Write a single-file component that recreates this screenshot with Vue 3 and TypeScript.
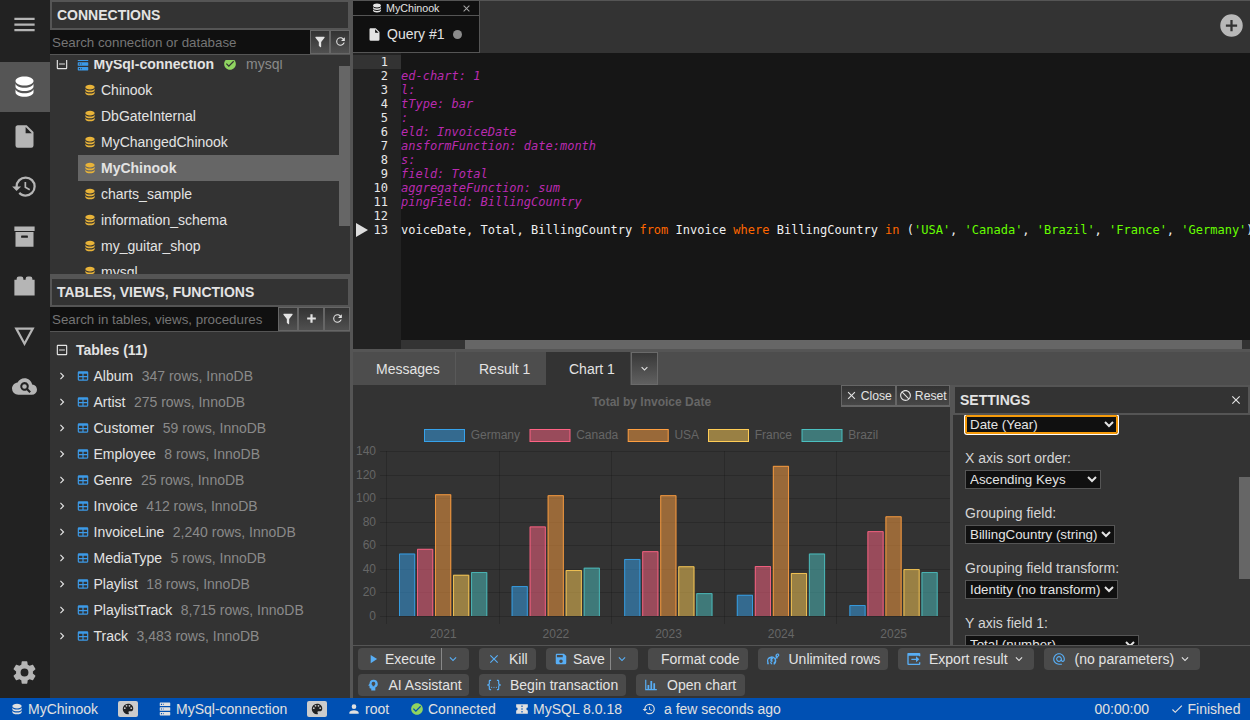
<script setup lang="ts">
import { h } from 'vue'

const paths: Record<string, string> = {
  menu: 'M3,6H21V8H3V6M3,11H21V13H3V11M3,16H21V18H3V16Z',
  database: 'M12,3C7.58,3 4,4.79 4,7C4,9.21 7.58,11 12,11C16.42,11 20,9.21 20,7C20,4.79 16.42,3 12,3M4,9V12C4,14.21 7.58,16 12,16C16.42,16 20,14.21 20,12V9C20,11.21 16.42,13 12,13C7.58,13 4,11.21 4,9M4,14V17C4,19.21 7.58,21 12,21C16.42,21 20,19.21 20,17V14C20,16.21 16.42,18 12,18C7.58,18 4,16.21 4,14Z',
  file: 'M13,9V3.5L18.5,9M6,2C4.89,2 4,2.89 4,4V20A2,2 0 0,0 6,22H18A2,2 0 0,0 20,20V8L14,2H6Z',
  history: 'M13.5,8H12V13L16.28,15.54L17,14.33L13.5,12.25V8M13,3A9,9 0 0,0 4,12H1L4.96,16.03L9,12H6A7,7 0 0,1 13,5A7,7 0 0,1 20,12A7,7 0 0,1 13,19C11.07,19 9.32,18.21 8.06,16.94L6.64,18.36C8.27,20 10.5,21 13,21A9,9 0 0,0 22,12A9,9 0 0,0 13,3',
  archive: 'M3,3H21V7H3V3M4,8H20V21H4V8M9.5,11A0.5,0.5 0 0,0 9,11.5V13H15V11.5A0.5,0.5 0 0,0 14.5,11H9.5Z',
  brick: 'M19,6V5A2,2 0 0,0 17,3H15A2,2 0 0,0 13,5V6H11V5A2,2 0 0,0 9,3H7A2,2 0 0,0 5,5V6H3V20H21V6H19Z',
  triangle: 'M3,4H21L12,20.5ZM6.4,6L12,16.4L17.6,6Z',
  cloudSearch: 'M19.35,10.04C18.67,6.59 15.64,4 12,4C9.11,4 6.6,5.64 5.35,8.04C2.34,8.36 0,10.91 0,14A6,6 0 0,0 6,20H19A5,5 0 0,0 24,15C24,12.36 21.95,10.22 19.35,10.04ZM12,7.7A4.2,4.2 0 0,1 15.6,14.1L18.2,16.7L16.7,18.2L14.1,15.6A4.2,4.2 0 1,1 12,7.7ZM12,9.8A2.2,2.2 0 0,0 12,14.2A2.2,2.2 0 0,0 12,9.8Z',
  cog: 'M12,15.5A3.5,3.5 0 0,1 8.5,12A3.5,3.5 0 0,1 12,8.5A3.5,3.5 0 0,1 15.5,12A3.5,3.5 0 0,1 12,15.5M19.43,12.97C19.47,12.65 19.5,12.33 19.5,12C19.5,11.67 19.47,11.34 19.43,11L21.54,9.37C21.73,9.22 21.78,8.95 21.66,8.73L19.66,5.27C19.54,5.05 19.27,4.96 19.05,5.05L16.56,6.05C16.04,5.66 15.5,5.32 14.87,5.07L14.5,2.42C14.46,2.18 14.25,2 14,2H10C9.75,2 9.54,2.18 9.5,2.42L9.13,5.07C8.5,5.32 7.96,5.66 7.44,6.05L4.95,5.05C4.73,4.96 4.46,5.05 4.34,5.27L2.34,8.73C2.21,8.95 2.27,9.22 2.46,9.37L4.57,11C4.53,11.34 4.5,11.67 4.5,12C4.5,12.33 4.53,12.65 4.57,12.97L2.46,14.63C2.27,14.78 2.21,15.05 2.34,15.27L4.34,18.73C4.46,18.95 4.73,19.03 4.95,18.95L7.44,17.94C7.96,18.34 8.5,18.68 9.13,18.93L9.5,21.58C9.54,21.82 9.75,22 10,22H14C14.25,22 14.46,21.82 14.5,21.58L14.87,18.93C15.5,18.67 16.04,18.34 16.56,17.94L19.05,18.95C19.27,19.03 19.54,18.95 19.66,18.73L21.66,15.27C21.78,15.05 21.73,14.78 21.54,14.63L19.43,12.97Z',
  server: 'M4,1H20A1,1 0 0,1 21,2V6A1,1 0 0,1 20,7H4A1,1 0 0,1 3,6V2A1,1 0 0,1 4,1M4,9H20A1,1 0 0,1 21,10V14A1,1 0 0,1 20,15H4A1,1 0 0,1 3,14V10A1,1 0 0,1 4,9M4,17H20A1,1 0 0,1 21,18V22A1,1 0 0,1 20,23H4A1,1 0 0,1 3,22V18A1,1 0 0,1 4,17M9,5H10V3H9V5M9,13H10V11H9V13M9,21H10V19H9V21M5,3V5H7V3H5M5,11V13H7V11H5M5,19V21H7V19H5Z',
  minusBox: 'M19,19V5H5V19H19M19,3A2,2 0 0,1 21,5V19A2,2 0 0,1 19,21H5A2,2 0 0,1 3,19V5C3,3.89 3.9,3 5,3H19M17,11V13H7V11H17Z',
  checkCircle: 'M12 2C6.5 2 2 6.5 2 12S6.5 22 12 22 22 17.5 22 12 17.5 2 12 2M10 17L5 12L6.41 10.59L10 14.17L17.59 6.58L19 8L10 17Z',
  filter: 'M14,12V19.88C14.04,20.18 13.94,20.5 13.71,20.71C13.32,21.1 12.69,21.1 12.3,20.71L10.29,18.7C10.06,18.47 9.96,18.16 10,17.87V12H9.97L4.21,4.62C3.87,4.19 3.95,3.56 4.38,3.22C4.57,3.08 4.78,3 5,3H19C19.22,3 19.43,3.08 19.62,3.22C20.05,3.56 20.13,4.19 19.79,4.62L14.03,12H14Z',
  refresh: 'M17.65,6.35C16.2,4.9 14.21,4 12,4A8,8 0 0,0 4,12A8,8 0 0,0 12,20C15.73,20 18.84,17.45 19.73,14H17.65C16.83,16.33 14.61,18 12,18A6,6 0 0,1 6,12A6,6 0 0,1 12,6C13.66,6 15.14,6.69 16.22,7.78L13,11H20V4L17.65,6.35Z',
  plusThick: 'M20 14H14V20H10V14H4V10H10V4H14V10H20V14Z',
  chevronRight: 'M8.59,16.58L13.17,12L8.59,7.41L10,6L16,12L10,18L8.59,16.58Z',
  chevronDown: 'M7.41,8.58L12,13.17L16.59,8.58L18,10L12,16L6,10L7.41,8.58Z',
  table: 'M5,4H19A2,2 0 0,1 21,6V18A2,2 0 0,1 19,20H5A2,2 0 0,1 3,18V6A2,2 0 0,1 5,4M5,8V12H11V8H5M13,8V12H19V8H13M5,14V18H11V14H5M13,14V18H19V14H13Z',
  close: 'M19,6.41L17.59,5L12,10.59L6.41,5L5,6.41L10.59,12L5,17.59L6.41,19L12,13.41L17.59,19L19,17.59L13.41,12L19,6.41Z',
  plusCircle: 'M17,13H13V17H11V13H7V11H11V7H13V11H17M12,2A10,10 0 0,0 2,12A10,10 0 0,0 12,22A10,10 0 0,0 22,12A10,10 0 0,0 12,2Z',
  cancel: 'M12 2C17.5 2 22 6.5 22 12S17.5 22 12 22 2 17.5 2 12 6.5 2 12 2M12 4C10.1 4 8.4 4.6 7.1 5.7L18.3 16.9C19.3 15.5 20 13.8 20 12C20 7.6 16.4 4 12 4M16.9 18.3L5.7 7.1C4.6 8.4 4 10.1 4 12C4 16.4 7.6 20 12 20C13.9 20 15.6 19.4 16.9 18.3Z',
  play: 'M8,5.14V19.14L19,12.14L8,5.14Z',
  save: 'M15,9H5V5H15M12,19A3,3 0 0,1 9,16A3,3 0 0,1 12,13A3,3 0 0,1 15,16A3,3 0 0,1 12,19M17,3H5C3.89,3 3,3.9 3,5V19A2,2 0 0,0 5,21H19A2,2 0 0,0 21,19V7L17,3Z',
  palette: 'M17.5,12A1.5,1.5 0 0,1 16,10.5A1.5,1.5 0 0,1 17.5,9A1.5,1.5 0 0,1 19,10.5A1.5,1.5 0 0,1 17.5,12M14.5,8A1.5,1.5 0 0,1 13,6.5A1.5,1.5 0 0,1 14.5,5A1.5,1.5 0 0,1 16,6.5A1.5,1.5 0 0,1 14.5,8M9.5,8A1.5,1.5 0 0,1 8,6.5A1.5,1.5 0 0,1 9.5,5A1.5,1.5 0 0,1 11,6.5A1.5,1.5 0 0,1 9.5,8M6.5,12A1.5,1.5 0 0,1 5,10.5A1.5,1.5 0 0,1 6.5,9A1.5,1.5 0 0,1 8,10.5A1.5,1.5 0 0,1 6.5,12M12,3A9,9 0 0,0 3,12A9,9 0 0,0 12,21A1.5,1.5 0 0,0 13.5,19.5C13.5,19.11 13.35,18.76 13.11,18.5C12.88,18.23 12.73,17.88 12.73,17.5A1.5,1.5 0 0,1 14.23,16H16A5,5 0 0,0 21,11C21,6.58 16.97,3 12,3Z',
  account: 'M12,4A4,4 0 0,1 16,8A4,4 0 0,1 12,12A4,4 0 0,1 8,8A4,4 0 0,1 12,4M12,14C16.42,14 20,15.79 20,18V20H4V18C4,15.79 7.58,14 12,14Z',
  ticket: 'M2,4H22V9.5A2.5,2.5 0 0,0 22,14.5V20H2V14.5A2.5,2.5 0 0,0 2,9.5ZM11,6V8.5H13V6ZM11,10.7V13.3H13V10.7ZM11,15.5V18H13V15.5Z',
  check: 'M21,7L9,19L3.5,13.5L4.91,12.09L9,16.17L19.59,5.59L21,7Z',
  json: 'M5,3H7V5H5V10A2,2 0 0,1 3,12A2,2 0 0,1 5,14V19H7V21H5C3.93,20.73 3,20.1 3,19V15A2,2 0 0,0 1,13H0V11H1A2,2 0 0,0 3,9V5A2,2 0 0,1 5,3M19,3A2,2 0 0,1 21,5V9A2,2 0 0,0 23,11H24V13H23A2,2 0 0,0 21,15V19A2,2 0 0,1 19,21H17V19H19V14A2,2 0 0,1 21,12A2,2 0 0,1 19,10V5H17V3H19M12,15A1,1 0 0,1 13,16A1,1 0 0,1 12,17A1,1 0 0,1 11,16A1,1 0 0,1 12,15M8,15A1,1 0 0,1 9,16A1,1 0 0,1 8,17A1,1 0 0,1 7,16A1,1 0 0,1 8,15M16,15A1,1 0 0,1 17,16A1,1 0 0,1 16,17A1,1 0 0,1 15,16A1,1 0 0,1 16,15Z',
  chart: 'M2,3H4V19H6V12H9V19H11V5H14V19H16V9H19V19H22V21H2Z',
  at: 'M12,15C12.81,15 13.5,14.7 14.11,14.11C14.7,13.5 15,12.81 15,12C15,11.19 14.7,10.5 14.11,9.89C13.5,9.3 12.81,9 12,9C11.19,9 10.5,9.3 9.89,9.89C9.3,10.5 9,11.19 9,12C9,12.81 9.3,13.5 9.89,14.11C10.5,14.7 11.19,15 12,15M12,2C14.75,2 17.1,3 19.05,4.95C21,6.9 22,9.25 22,12V13.45C22,14.45 21.65,15.3 21,16C20.3,16.67 19.5,17 18.5,17C17.3,17 16.31,16.5 15.56,15.5C14.56,16.5 13.38,17 12,17C10.63,17 9.45,16.5 8.46,15.54C7.5,14.55 7,13.38 7,12C7,10.63 7.5,9.45 8.46,8.46C9.45,7.5 10.63,7 12,7C13.38,7 14.55,7.5 15.54,8.46C16.5,9.45 17,10.63 17,12V13.45C17,13.86 17.16,14.22 17.46,14.53C17.76,14.84 18.11,15 18.5,15C18.92,15 19.27,14.84 19.57,14.53C19.87,14.22 20,13.86 20,13.45V12C20,9.81 19.23,7.93 17.65,6.35C16.07,4.77 14.19,4 12,4C9.81,4 7.93,4.77 6.35,6.35C4.77,7.93 4,9.81 4,12C4,14.19 4.77,16.07 6.35,17.65C7.93,19.23 9.81,20 12,20H17V22H12C9.25,22 6.9,21 4.95,19.05C3,17.1 2,14.75 2,12C2,9.25 3,6.9 4.95,4.95C6.9,3 9.25,2 12,2Z',
  head: 'M13,3A7,7 0 0,0 6,9.8L4.1,12.4C3.8,12.8 4.1,13.3 4.6,13.3H6V16A2,2 0 0,0 8,18H9V21.5H16V16.4A7,7 0 0,0 13,3ZM12.8,6.5A3.2,3.2 0 0,1 14.4,12.5V14H11.2V12.5A3.2,3.2 0 0,1 12.8,6.5Z',
  exportBox: 'M3,3H20A1.5,1.5 0 0,1 21.5,4.5V8H19.5V7H4V19H19.5V17H21.5V19.5A1.5,1.5 0 0,1 20,21H3.5A1.5,1.5 0 0,1 2,19.5V4.5A1.5,1.5 0 0,1 3,3ZM15,8L20,12.5L15,17V13.5H8V11.5H15Z',
  speed: 'M2,17C1,12 4,8 9,7.5C12,7.2 14.5,8.5 15.5,10.5L17,9C15,6.5 17,2.5 20,2.5C23.2,2.5 23.8,6.3 21.5,7.5L20,8.5V11H18V7.5L20.5,6C21.3,5.2 20.7,4.3 19.8,4.5C18.3,4.8 18.4,7.4 19,9L17,12C18.5,15 17.5,19 15,21.5H13V18L15,16C15.5,13 13.8,10 11,9.8L13,12L10,13L12,16L9,17L11,21H8.5L7,17.5L9,15L6.5,14.5L8.5,11L5.5,11.5C3.8,12.8 3.6,14.5 4,16L5,21H2Z',
}

const Icon = (p: { n: string; s?: number }) =>
  h('svg', { viewBox: '0 0 24 24', width: p.s ?? 14, height: p.s ?? 14, fill: 'currentColor', 'fill-rule': p.n === 'triangle' || p.n === 'cloudSearch' || p.n === 'ticket' || p.n === 'head' ? 'evenodd' : 'nonzero' }, [
    h('path', { d: paths[p.n] }),
  ])
Icon.props = ['n', 's']

const rail = ['file', 'history', 'archive', 'brick', 'triangle', 'cloudSearch']
const databases = ['Chinook', 'DbGateInternal', 'MyChangedChinook', 'MyChinook', 'charts_sample', 'information_schema', 'my_guitar_shop', 'mysql']
const tables: [string, string][] = [
  ['Album', '347'], ['Artist', '275'], ['Customer', '59'], ['Employee', '8'], ['Genre', '25'], ['Invoice', '412'],
  ['InvoiceLine', '2,240'], ['MediaType', '5'], ['Playlist', '18'], ['PlaylistTrack', '8,715'], ['Track', '3,483'],
]
const comments = ['', 'ed-chart: 1', 'l:', 'tType: bar', ':', 'eld: InvoiceDate', 'ansformFunction: date:month', 's:', 'field: Total', 'aggregateFunction: sum', 'pingField: BillingCountry', '']
const countries = ['USA', 'Canada', 'Brazil', 'France', 'Germany']

const series = [
  { name: 'Germany', x: 71, rgb: '54,162,235', data: [53, 25.4, 48.4, 18, 9.3] },
  { name: 'Canada', x: 176.5, rgb: '255,99,132', data: [57, 76, 55, 42.4, 72] },
  { name: 'USA', x: 274.7, rgb: '255,159,64', data: [103.3, 102.5, 102.5, 127.4, 84.6] },
  { name: 'France', x: 355, rgb: '255,205,86', data: [35, 39, 42.2, 36.5, 39.8] },
  { name: 'Brazil', x: 448.5, rgb: '75,192,192', data: [37.3, 41, 19.4, 53, 37.3] },
]
const years = [2021, 2022, 2023, 2024, 2025]
const ticks = [0, 20, 40, 60, 80, 100, 120, 140]
const X0 = 34
const CW = 112.6
const yOf = (v: number) => 231 - (v * 165) / 140
const barX = (s: number, k: number) => X0 + k * CW + 12 + s * 18.02
function barEdge(s: number, k: number, v: number) {
  const x = barX(s, k) + 0.5
  return `M${x},231V${yOf(v) + 0.5}H${x + 15.2}V231`
}

const settings = [
  { label: 'X axis sort order:', value: 'Ascending Keys', cls: 'w1' },
  { label: 'Grouping field:', value: 'BillingCountry (string)', cls: 'w2' },
  { label: 'Grouping field transform:', value: 'Identity (no transform)', cls: 'w3' },
  { label: 'Y axis field 1:', value: 'Total (number)', cls: 'w4' },
]
</script>

<template>
  <div class="app">
    <div class="main">
      <nav class="rail">
        <div class="rail-item menu"><Icon n="menu" :s="27" /></div>
        <div class="rail-item active"><Icon n="database" :s="27" /></div>
        <div v-for="r in rail" :key="r" class="rail-item"><Icon :n="r" :s="r === 'cloudSearch' ? 25 : 27" /></div>
        <div class="rail-item bottom"><Icon n="cog" :s="27" /></div>
      </nav>

      <aside class="side">
        <h2 class="title">CONNECTIONS</h2>
        <div class="search">
          <input placeholder="Search connection or database" />
          <button class="sb b20"><Icon n="filter" /></button>
          <button class="sb b20"><Icon n="refresh" :s="13" /></button>
        </div>
        <div class="conn">
          <div class="tree">
            <div class="row">
              <Icon n="minusBox" /><Icon class="blue gap" n="server" /><b>MySql-connection</b>
              <Icon class="green ok" n="checkCircle" /><span class="dim">mysql</span>
            </div>
            <div v-for="d in databases" :key="d" class="row db" :class="{ sel: d === 'MyChinook' }">
              <Icon class="gold" n="database" /><span>{{ d }}</span>
            </div>
          </div>
          <div class="thumb"></div>
        </div>
        <div class="hsplit"></div>
        <h2 class="title">TABLES, VIEWS, FUNCTIONS</h2>
        <div class="search">
          <input placeholder="Search in tables, views, procedures" />
          <button class="sb b20"><Icon n="filter" /></button>
          <button class="sb b26"><Icon n="plusThick" :s="13" /></button>
          <button class="sb b26"><Icon n="refresh" :s="13" /></button>
        </div>
        <div class="tables">
          <div class="row"><Icon n="minusBox" /><b class="group">Tables (11)</b></div>
          <div v-for="t in tables" :key="t[0]" class="row">
            <Icon n="chevronRight" /><Icon class="blue gap" n="table" /><span>{{ t[0] }}</span>
            <span class="dim meta">{{ t[1] }} rows, InnoDB</span>
          </div>
        </div>
      </aside>
      <div class="vsplit"></div>

      <section class="work">
        <header class="tabs">
          <div class="tabgroup">
            <div class="tg-name"><Icon n="database" :s="12" /><span>MyChinook</span><Icon class="x" n="close" :s="11" /></div>
            <div class="tab"><Icon n="file" :s="15" /><span>Query #1</span><i class="dot"></i></div>
          </div>
          <Icon class="add" n="plusCircle" :s="27" />
        </header>

        <div class="editor">
          <div class="gutter">
            <div v-for="n in 13" :key="n" class="ln" :class="{ cur: n === 1 }">
              <svg v-if="n === 13" class="marker" width="12" height="14"><path d="M0,0L12,7L0,14Z" fill="#ddd" /></svg>{{ n }}
            </div>
          </div>
          <div class="code">
            <div class="lines">
              <div v-for="(c, i) in comments" :key="i" class="cl cm">{{ c }}</div>
              <div class="cl">voiceDate, Total, BillingCountry <span class="kw">from</span> Invoice <span class="kw">where</span> BillingCountry <span class="kw">in</span> (<template v-for="(c, i) in countries" :key="c"><span class="str">'{{ c }}'</span>{{ i < 4 ? ', ' : ')' }}</template></div>
            </div>
            <div class="hscroll"><div class="hthumb"></div></div>
          </div>
        </div>

        <div class="rtabs">
          <div class="rt t1">Messages</div>
          <div class="rt t2">Result 1</div>
          <div class="rt t3">Chart 1</div>
          <button class="rbtn"><Icon n="chevronDown" :s="13" /></button>
        </div>

        <div class="result">
          <div class="chart">
            <svg width="597" height="260">
              <text x="298.5" y="21" class="ct" text-anchor="middle">Total by Invoice Date</text>
              <g v-for="s in series" :key="s.name">
                <rect :x="s.x + 0.5" y="44.5" width="40" height="12" :fill="`rgba(${s.rgb},.5)`" :stroke="`rgb(${s.rgb})`" />
                <text :x="s.x + 46.7" y="54">{{ s.name }}</text>
              </g>
              <g v-for="t in ticks" :key="t">
                <line x1="27" x2="597" :y1="Math.round(yOf(t)) + 0.5" :y2="Math.round(yOf(t)) + 0.5" class="grid" />
                <text x="23" :y="yOf(t) + 4" text-anchor="end">{{ t }}</text>
              </g>
              <g v-for="(y, k) in years" :key="y">
                <line :x1="Math.round(X0 + k * CW) - 0.5" :x2="Math.round(X0 + k * CW) - 0.5" y1="66" y2="239" class="grid" />
                <text :x="X0 + (k + 0.5) * CW" y="253" text-anchor="middle">{{ y }}</text>
              </g>
              <g v-for="(s, si) in series" :key="s.name + 'b'">
                <template v-for="(v, k) in s.data" :key="k">
                  <rect :x="barX(si, k)" :y="yOf(v)" width="16.2" :height="231 - yOf(v)" :fill="`rgba(${s.rgb},.5)`" />
                  <path :d="barEdge(si, k, v)" fill="none" :stroke="`rgb(${s.rgb})`" stroke-opacity=".85" />
                </template>
              </g>
            </svg>
            <div class="chart-btns">
              <button><Icon n="close" :s="13" />Close</button><button><Icon n="cancel" :s="13" />Reset</button>
            </div>
          </div>
          <div class="vsplit2"></div>
          <div class="settings">
            <h2 class="title">SETTINGS<Icon n="close" :s="14" /></h2>
            <div class="form">
              <div class="focused"><select><option>Date (Year)</option></select></div>
              <div v-for="f in settings" :key="f.label" class="field">
                <label>{{ f.label }}</label>
                <select :class="f.cls"><option>{{ f.value }}</option></select>
              </div>
              <div class="sthumb"></div>
            </div>
          </div>
        </div>

        <footer class="toolbar">
          <div class="line">
            <div class="btn e"><Icon n="play" /><span>Execute</span><i class="drop"><Icon n="chevronDown" /></i></div>
            <div class="btn k"><Icon n="close" /><span>Kill</span></div>
            <div class="btn s"><Icon n="save" /><span>Save</span><i class="drop"><Icon n="chevronDown" /></i></div>
            <div class="btn f"><span>Format code</span></div>
            <div class="btn u"><Icon n="speed" /><span>Unlimited rows</span></div>
            <div class="btn x"><Icon n="exportBox" :s="16" /><span>Export result</span><Icon class="white" n="chevronDown" /></div>
            <div class="btn p"><Icon n="at" /><span>(no parameters)</span><Icon class="white" n="chevronDown" /></div>
          </div>
          <div class="line">
            <div class="btn a"><Icon n="head" /><span>AI Assistant</span></div>
            <div class="btn b"><Icon n="json" /><span>Begin transaction</span></div>
            <div class="btn o"><Icon n="chart" /><span>Open chart</span></div>
          </div>
        </footer>
      </section>
    </div>

    <div class="status">
      <div><Icon n="database" /><span>MyChinook</span></div>
      <div><i class="badge"><Icon n="palette" /></i></div>
      <div><Icon n="server" /><span>MySql-connection</span></div>
      <div><i class="badge"><Icon n="palette" /></i></div>
      <div><Icon n="account" /><span>root</span></div>
      <div><Icon class="green" n="checkCircle" /><span>Connected</span></div>
      <div><Icon n="ticket" /><span>MySQL 8.0.18</span></div>
      <div class="time"><Icon n="history" /><span>a few seconds ago</span></div>
      <div>00:00:00</div>
      <div><Icon n="check" /><span>Finished</span></div>
    </div>
  </div>
</template>

<style>
body { background: #333; overflow: hidden; }
</style>

<style scoped>
* { box-sizing: border-box; }
.app { width: 1250px; height: 720px; display: flex; flex-direction: column; overflow: hidden; background: #333; color: #e3e3e3; font: 14px/16px "Liberation Sans", Arial, sans-serif; }
svg { display: block; flex: none; }
button { font: inherit; color: inherit; padding: 0; display: flex; align-items: center; justify-content: center; }
.main { display: flex; height: 698px; }
.rail { width: 50px; background: #222; display: flex; flex-direction: column; }
.rail-item { height: 50px; display: flex; align-items: center; justify-content: center; color: #b5b5b5; flex: none; padding: 0 1px 2px 0; }
.rail-item.menu { height: 48px; margin-bottom: 14px; padding-bottom: 0; }
.rail-item.active { background: #555; color: #fff; height: 50px; }
.rail-item.bottom { margin-top: auto; height: 52px; padding-bottom: 0; }
.side { width: 300px; display: flex; flex-direction: column; }
.title { margin: 0; height: 30px; border: 2px solid #555; padding: 0 5px; font-size: 14px; display: flex; align-items: center; flex: none; }
.search { display: flex; height: 25px; border-bottom: 1px solid #555; background: #101010; flex: none; }
.search input { flex: 1; min-width: 0; border: 0; outline: 0; background: #101010; padding: 0 2px; font: 13.333px "Liberation Sans", Arial, sans-serif; color: #e3e3e3; }
.search input::placeholder { color: #757575; }
.sb { border: 1px solid #666; background: linear-gradient(#333, #505050); height: 24px; padding-bottom: 1px; }
.b20 { width: 20px; }
.b26 { width: 26px; }
.conn { height: 214px; margin-top: 5px; overflow: hidden; display: flex; flex: none; }
.tree { width: 289px; margin-top: -9px; }
.thumb { width: 11px; height: 160px; margin-top: 6px; background: #666; }
.row { height: 26px; display: flex; align-items: center; padding-left: 5px; white-space: nowrap; }
.row .gap { margin: 0 4px 0 6.5px; }
.row .ok { margin: 0 9px; }
.row.db { margin-left: 28px; }
.row.db svg { margin-right: 4px; }
.row.sel { background: #666; font-weight: bold; }
.group { margin-left: 7px; }
.dim { color: #8a8a8a; }
.meta { margin-left: 8.5px; }
.blue { color: #3c9ae8; }
.green { color: #8fd460; }
.gold { color: #e8b339; }
.hsplit { height: 3px; background: #555; flex: none; }
.tables { padding-top: 5px; }
.vsplit { width: 3px; background: #555; }
.work { width: 897px; display: flex; flex-direction: column; }
.tabs { height: 53px; border-top: 1px solid #555; display: flex; justify-content: space-between; }
.tabgroup { width: 127px; border-right: 1px solid #555; background: #101010; }
.tg-name { height: 15px; border-bottom: 1px solid #555; display: flex; align-items: center; font-size: 10.7px; padding-left: 18px; }
.tg-name span { margin-left: 3px; }
.tg-name .x { margin-left: 22px; color: #aaa; }
.tab { height: 37px; border-bottom: 1px solid #555; display: flex; align-items: center; padding-left: 14px; }
.tab span { margin: 0 8px 0 5px; }
.dot { width: 9px; height: 9px; border-radius: 50%; background: #8c8c8c; }
.add { color: #b8b8b8; margin: 11px 5px 0 0; }
.editor { height: 296px; display: flex; background: #161616; font: 12px/14px "DejaVu Sans Mono", monospace; }
.gutter { width: 48px; background: #222; padding-top: 2px; }
.ln { height: 14px; text-align: right; padding-right: 13px; position: relative; color: #e8e8e8; }
.ln.cur { background: #333; }
.marker { position: absolute; left: 3px; top: 0; }
.code { width: 849px; overflow: hidden; display: flex; flex-direction: column; }
.lines { padding-top: 2px; flex: 1; }
.cl { height: 14px; white-space: pre; color: #f0f0f0; }
.cm { color: #b92bb0; font-style: italic; }
.kw { color: #ff6600; }
.str { color: #66ff00; }
.hscroll { height: 9px; background: #333; padding: 0 8px 0 64px; }
.hthumb { height: 9px; background: #666; }
.rtabs { height: 36px; border-top: 3px solid #555; background: #4d4d4d; display: flex; }
.rt { padding-left: 23px; display: flex; align-items: center; padding-top: 1px; }
.t1 { width: 103px; border-right: 1px solid #595959; }
.t2 { width: 90px; }
.t3 { width: 84px; background: #333; }
.rbtn { width: 27px; margin-left: 1px; border: 1px solid #6a6a6a; background: linear-gradient(#383838, #606060); }
.result { height: 260px; display: flex; }
.chart { width: 597px; position: relative; }
.chart text { font: 12px "Liberation Sans", Arial, sans-serif; fill: #666; }
.chart .ct { font-weight: bold; }
.grid { stroke: #000; stroke-opacity: .16; }
.chart-btns { position: absolute; right: 0; top: 0; display: flex; }
.chart-btns button { width: 54.5px; height: 22px; border: 1px solid #666; border-bottom-width: 2px; background: linear-gradient(#333, #474747); font-size: 12.2px; gap: 3px; white-space: nowrap; }
.vsplit2 { width: 3px; background: #555; }
.settings { width: 297px; }
.settings .title { justify-content: space-between; }
.form { height: 230px; overflow: hidden; position: relative; padding-left: 12px; color: #d5d5d5; }
select { display: block; height: 19px; padding: 0; margin: 0; border: 1px solid #555; border-radius: 0; background-color: #101010; color: #e3e3e3; font: 13.333px "Liberation Sans", Arial, sans-serif; }
.focused { height: 35px; }
.focused select { width: 153px; border-color: #f59b0b; border-radius: 2px; box-shadow: inset 0 0 0 1px #f59b0b, 0 0 0 1px #fff; }
.field { height: 55px; }
.field label { display: block; height: 20px; }
.w1 { width: 136px; }
.w2 { width: 150px; }
.w3 { width: 153px; }
.w4 { width: 174px; }
.sthumb { position: absolute; right: 0; top: 62px; width: 11px; height: 102px; background: #666; }
.toolbar { height: 53px; border-top: 1px solid #555; padding: 2px 5px; display: flex; flex-direction: column; gap: 4px; }
.line { display: flex; gap: 10px; height: 22px; }
.btn { background: #4a4a4a; border-radius: 4px; display: flex; align-items: center; white-space: nowrap; height: 22px; }
.btn svg { color: #58aef5; margin-left: 8px; }
.btn span { margin-left: 5px; }
.btn .drop { border-left: 1px solid #888; height: 22px; margin-left: auto; width: 28px; display: flex; align-items: center; }
.btn .drop svg { margin-left: 4px; }
.btn svg.white { color: #e3e3e3; margin-left: 4px; }
.e { width: 111px; }
.k { width: 57px; }
.k span { margin-left: 8px; }
.s { width: 92px; }
.f { width: 100px; }
.f span { margin-left: 13px; }
.u { width: 130px; }
.u span { margin-left: 8.5px; }
.x span { margin-left: 7px; }
.btn.x { width: 136px; }
.p { width: 156px; }
.p span { margin-left: 8.5px; }
.a { width: 111px; }
.a span { margin-left: 8.5px; }
.b { width: 147px; }
.b span { margin-left: 9px; }
.o { width: 109px; }
.o span { margin-left: 9px; }
.status { height: 22px; background: #0050b3; display: grid; grid-template-columns: 108px 40px 149px 40px 63px 105px 127px 452.5px 75px 70.5px; padding-left: 10px; color: #e0e0e0; }
.status > div { display: flex; align-items: center; white-space: nowrap; }
.status span { margin-left: 4px; }
.status .time span { margin-left: 8px; }
.badge { width: 20px; height: 16px; border-radius: 2px; background: #ccc; color: #222; display: flex; align-items: center; justify-content: center; }
</style>
